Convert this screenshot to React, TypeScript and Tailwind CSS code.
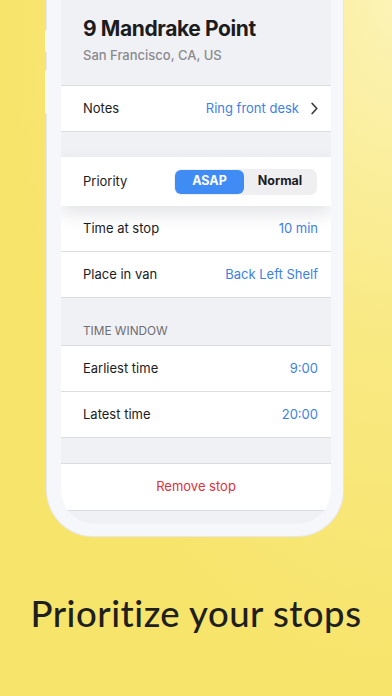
import React from "react";

const font = { fontFamily: "Inter, 'Noto Sans', sans-serif" };

function Row({ label, value, chevron }: { label: string; value: string; chevron?: boolean }) {
  return (
    <div className="flex h-[46px] items-center justify-between border-b border-[#dcdde3] bg-white pl-[22px] pr-[13px]">
      <span className="text-[13px] text-[#1c1c1e]">{label}</span>
      <span className="flex items-center text-[13px] text-[#3d7fe6]">
        {value}
        {chevron ? (
          <svg className="ml-[12px]" width="7" height="13" viewBox="0 0 7 13" fill="none">
            <path d="M1.2 1.5L5.8 6.5L1.2 11.5" stroke="#3c3c43" strokeWidth="1.7" strokeLinecap="round" strokeLinejoin="round" />
          </svg>
        ) : null}
      </span>
    </div>
  );
}

export default function App() {
  return (
    <div
      className="relative h-[696px] w-[392px] overflow-hidden bg-[radial-gradient(ellipse_at_top_right,#fcf3b6_0%,#f9e982_35%,#f7e46b_70%)]"
      style={font}
    >
      <div className="absolute left-[45px] top-[30px] h-[22px] w-[2px] rounded-l-[2px] bg-[#f7f8fb]" />
      <div className="absolute left-[45px] top-[70px] h-[44px] w-[2px] rounded-l-[2px] bg-[#f7f8fb]" />
      <div className="ml-[47px] w-[296px] rounded-b-[46px] bg-[#f6f7fa] pb-[12px] pl-[14px] pr-[12px] shadow-[0_0_0_1px_#e6e7ee]">
        <div className="overflow-hidden rounded-b-[34px] bg-[#f0f1f5]">
          {/* header */}
          <div className="h-[86px] border-b border-[#dcdde3] pl-[22px] pt-[15px]">
            <div className="text-[21px] font-bold leading-[28px] tracking-[-0.4px] text-[#1c1c1e]">9 Mandrake Point</div>
            <div className="mt-[3px] text-[13px] font-medium text-[#8a8a8f]">San Francisco, CA, US</div>
          </div>
          <Row label="Notes" value="Ring front desk" chevron />
          <div className="h-[25px]" />
          {/* priority */}
          <div className="relative z-10 flex h-[49px] items-center justify-between bg-white pl-[22px] pr-[14px] shadow-[0_8px_18px_rgba(40,45,70,0.13)]">
            <span className="text-[13px] text-[#1c1c1e]">Priority</span>
            <div className="flex h-[26px] w-[143px] rounded-[7px] bg-[#efeff2] p-[1px]">
              <div className="flex w-[69px] items-center justify-center rounded-[6px] bg-[#3f8cf5] text-[12.5px] font-bold text-white">
                ASAP
              </div>
              <div className="flex flex-1 items-center justify-center text-[12.5px] font-bold text-[#1c1c1e]">Normal</div>
            </div>
          </div>
          <Row label="Time at stop" value="10 min" />
          <Row label="Place in van" value="Back Left Shelf" />
          <div className="flex h-[48px] items-end border-b border-[#dcdde3] pb-[6px] pl-[22px]">
            <span className="text-[11.8px] leading-[16px] text-[#6d6d72]">TIME WINDOW</span>
          </div>
          <Row label="Earliest time" value="9:00" />
          <Row label="Latest time" value="20:00" />
          <div className="h-[26px] border-b border-[#dcdde3]" />
          <div className="flex h-[46px] items-center justify-center bg-white text-[13px] text-[#e0313b]">Remove stop</div>
          <div className="mx-[5px] border-t border-[#dcdde3]" />
          <div className="h-[13px]" />
        </div>
      </div>
      <div
        className="mt-[50px] text-center text-[36.5px] font-medium tracking-[0.5px] text-[#1f1f1f]"
        style={{ fontFamily: "Lato, 'Noto Sans', sans-serif" }}
      >
        Prioritize your stops
      </div>
    </div>
  );
}
